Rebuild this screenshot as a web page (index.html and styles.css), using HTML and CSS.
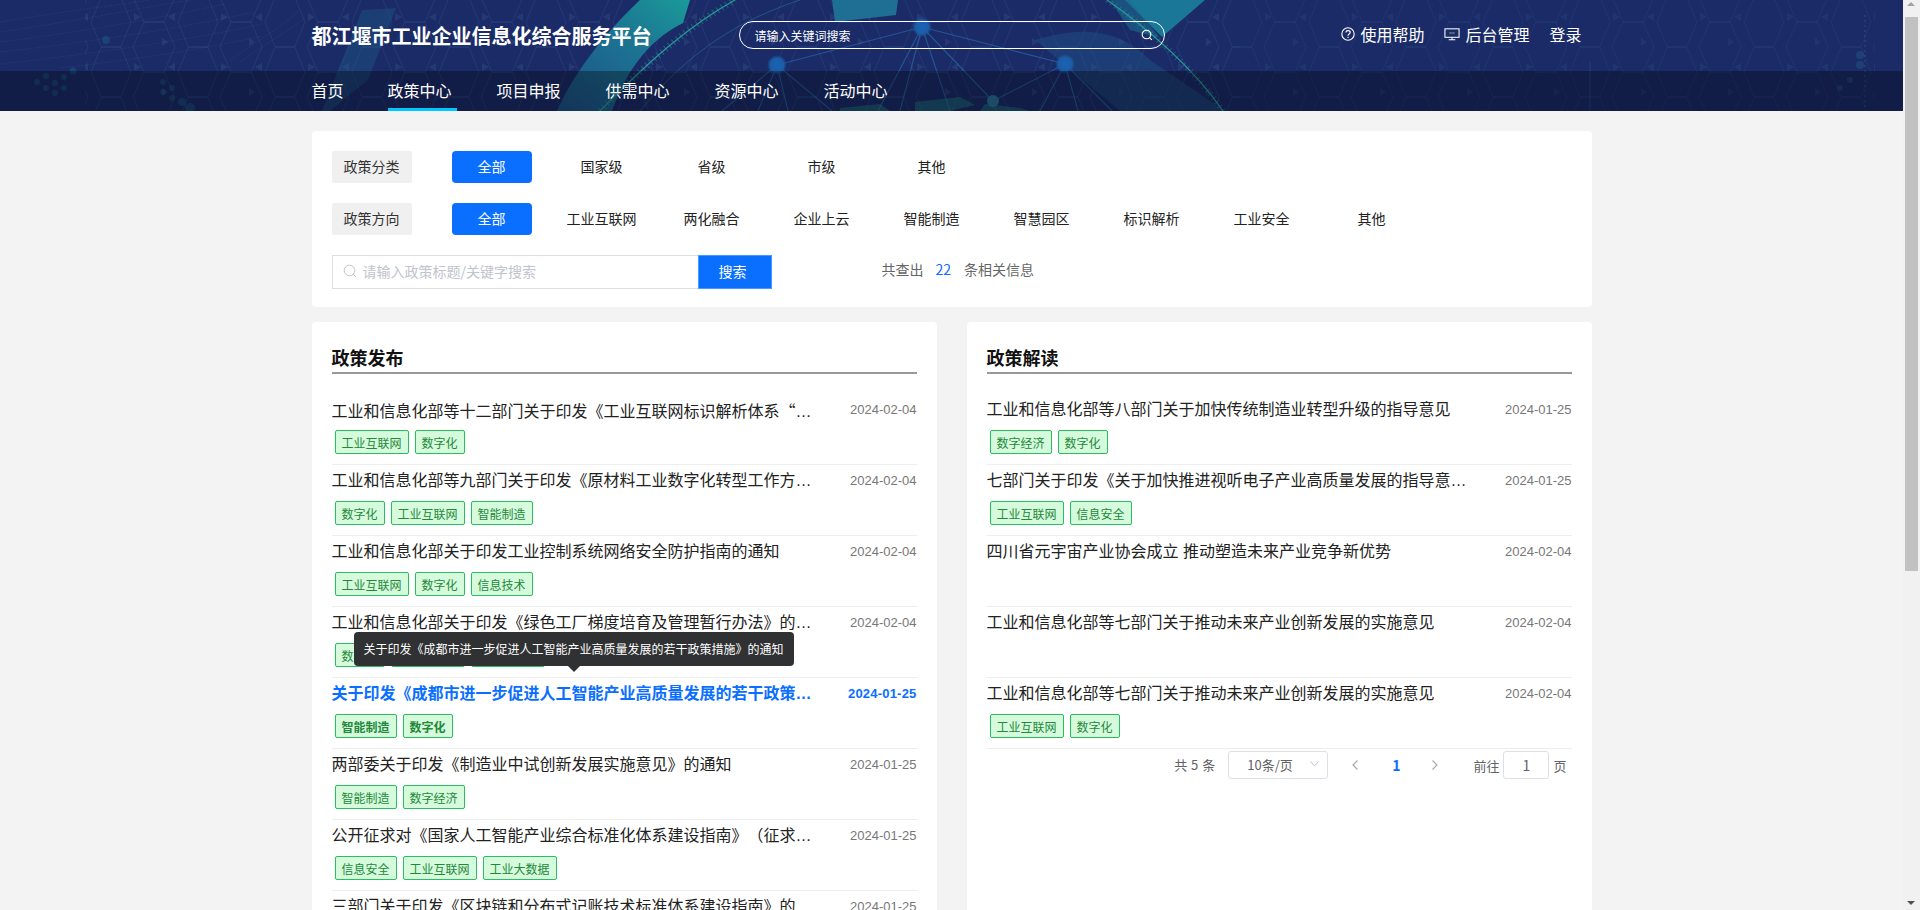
FILE: index.html
```html
<!DOCTYPE html>
<html lang="zh-CN">
<head>
    <meta charset="UTF-8">
    <title>都江堰市工业企业信息化综合服务平台</title>
    <link rel="stylesheet" href="styles.css">
</head>
<body>
    <header class="site-header">
        <!-- header artwork: hex grid, arcs and network -->
        <svg class="header-art" width="1903" height="111" viewBox="0 0 1903 111">
            <defs>
                <pattern id="hex" x="68" y="-3" width="87" height="50" patternUnits="userSpaceOnUse">
                    <path d="M33 0.500 H53 L63 25 L53 49.500 H33 L23 25 Z" fill="none" stroke="#4f7fb5" stroke-opacity=".16"/>
                    <path d="M-11 25 H9 L20 50 L9 75 H-11 L-22 50 Z" fill="none" stroke="#4f7fb5" stroke-opacity=".16"/>
                    <path d="M76 25 H96 L107 50 L96 75 H76 L65 50 Z" fill="none" stroke="#4f7fb5" stroke-opacity=".16"/>
                    <path d="M76 -25 H96 L107 0 L96 25 H76 L65 0 Z" fill="none" stroke="#4f7fb5" stroke-opacity=".16"/>
                    <path d="M-11 -25 H9 L20 0 L9 25 H-11 L-22 0 Z" fill="none" stroke="#4f7fb5" stroke-opacity=".16"/>
                    <path d="M13 20 L20 16 V24 Z M66 16 L73 20 L66 24 Z M13 45 L7 41 V49 Z" fill="#6f8fc0" fill-opacity=".14"/>
                </pattern>
                <linearGradient id="band" x1="0" y1="1" x2="1" y2="0">
                    <stop offset="0" stop-color="#1c4f88"/>
                    <stop offset=".6" stop-color="#1c7592"/>
                    <stop offset="1" stop-color="#1a9a9a"/>
                </linearGradient>
                <radialGradient id="node">
                    <stop offset="0" stop-color="#1b63b5"/>
                    <stop offset=".65" stop-color="#1b5ea8"/>
                    <stop offset="1" stop-color="#1b5ea8" stop-opacity="0"/>
                </radialGradient>
            </defs>
            <rect width="1903" height="111" fill="#1a2b67"/>
            <g stroke="#5a80b8" stroke-opacity=".14" stroke-dasharray="2 1" fill="none">
                <path d="M0 22 C60 12 110 6 150 0"/>
                <path d="M0 32 C70 22 130 10 190 0"/>
                <path d="M0 42 C80 32 150 20 225 4"/>
                <path d="M0 52 C90 42 170 30 255 12"/>
                <path d="M0 64 C90 54 190 40 262 24"/>
                <path d="M60 68 C130 60 200 50 262 36"/>
                <path d="M230 60 C260 40 290 20 300 10"/>
                <path d="M240 62 C265 44 290 30 305 18"/>
            </g>
            <rect x="85" y="0" width="1790" height="111" fill="url(#hex)"/>
            <rect x="1240" y="0" width="663" height="111" fill="#1a2b67" fill-opacity=".3"/>
            <g fill="#1e7f94" fill-opacity=".3">
                <circle cx="106" cy="40" r="4"/><circle cx="73" cy="71" r="3.500"/>
                <circle cx="37" cy="82" r="3"/><circle cx="46" cy="76" r="3"/><circle cx="46" cy="88" r="3"/>
                <circle cx="55" cy="83" r="3"/><circle cx="64" cy="77" r="3"/><circle cx="64" cy="88" r="3"/><circle cx="55" cy="93" r="3"/>
                <circle cx="163" cy="82" r="3"/><circle cx="172" cy="88" r="3"/><circle cx="163" cy="92" r="3"/><circle cx="172" cy="98" r="3"/><circle cx="182" cy="102" r="4"/>
                <circle cx="190" cy="108" r="5"/>
            </g>
            <path d="M362 10 L396 8 L368 80 L330 111 L322 111 Z" fill="#1d6a94" fill-opacity=".3"/>
            <path d="M557 111 C575 70 608 30 640 0 L690 0 L683 23 C645 42 625 75 612 111 Z" fill="url(#band)"/>
            <path d="M832 0 H898 L896 15 L835 22 Z" fill="#1f6f95"/>
            <path d="M1035 40 C1085 25 1120 30 1150 60 L1225 111 H1120 Z" fill="#1f4f85" fill-opacity=".5"/>
            <path d="M1125 0 H1205 L1162 37 Z" fill="#1a7798"/>
            <path d="M1110 0 H1130 L1160 38 L1130 30 Z" fill="#1b6a90" fill-opacity=".6"/>
            <path d="M600 111 C650 60 690 25 735 0" fill="none" stroke="#2a9a9a" stroke-width="1.200"/>
            <path d="M600 111 C650 60 690 25 735 0" fill="none" stroke="#2a9a9a" stroke-width="7" stroke-dasharray="1 4" stroke-opacity=".5"/>
            <path d="M1107 0 C1150 30 1195 70 1223 111" fill="none" stroke="#2a9a9a" stroke-width="1.200"/>
            <path d="M1107 0 C1150 30 1195 70 1223 111" fill="none" stroke="#2a9a9a" stroke-width="6" stroke-dasharray="1 4" stroke-opacity=".45"/>
            <path d="M640 111 C690 50 740 20 800 0" fill="none" stroke="#2a8a9a" stroke-opacity=".45"/>
            <g stroke="#2a72b5" stroke-width="1.200" stroke-opacity=".6" fill="none">
                <path d="M777 65 L922 27 L1065 64 L993 101"/>
                <path d="M922 27 L878 111 M922 27 L900 111 M922 27 L993 101 M922 27 L950 111"/>
                <path d="M777 65 L722 111 M777 65 L758 111 M777 65 L788 111 M777 65 L832 111"/>
                <path d="M1065 64 L1040 111 M1065 64 L1078 111 M1065 64 L1112 111"/>
            </g>
            <circle cx="922" cy="27" r="10" fill="url(#node)"/>
            <circle cx="777" cy="65" r="10" fill="url(#node)"/>
            <circle cx="1065" cy="64" r="10" fill="url(#node)"/>
            <circle cx="993" cy="101" r="6" fill="#2a6f9a"/>
            <path d="M915 102 L960 97 L975 105 L950 111 H915 Z M840 108 L880 104 L890 111 H840 Z M985 104 L1020 108 L1030 111 H980 Z" fill="#1f7f8a" fill-opacity=".5"/>
            <path d="M1590 62 V111" stroke="#3f6fa5" stroke-opacity=".35"/>
            <path d="M1865 15 V111" stroke="#3f6fa5" stroke-opacity=".5" stroke-dasharray="2 3"/>
            <g fill="#2a6f9a" fill-opacity=".3">
                <circle cx="1860" cy="55" r="4"/><circle cx="1860" cy="65" r="4"/><circle cx="1850" cy="80" r="3"/><circle cx="1840" cy="88" r="3"/>
            </g>
        </svg>
        <div class="top-bar">
            <div class="wrap top-inner">
                <h1 class="site-title">都江堰市工业企业信息化综合服务平台</h1>
                <div class="top-search">
                    <span>请输入关键词搜索</span>
                    <svg width="12" height="12" viewBox="0 0 12 12" fill="none" stroke="#fff" stroke-width="1.100"><circle cx="5.500" cy="5.500" r="4.300"/><path d="M8.600 8.600 L10.800 10.800"/></svg>
                </div>
                <div class="top-links">
                    <a class="top-link">
                        <svg width="14" height="14" viewBox="0 0 14 14" fill="none" stroke="#fff" stroke-width="1.100"><circle cx="7" cy="7" r="6.200"/><path d="M5 5.500 C5 2.900 9.200 3 9.200 5.400 C9.200 7 7 7 7 8.700"/><path d="M7 9.800 V11"/></svg>
                        使用帮助
                    </a>
                    <a class="top-link">
                        <svg width="16" height="14" viewBox="0 0 17 14" fill="none" stroke="#fff" stroke-width="1.100"><rect x="1" y="1.500" width="15" height="9"/><path d="M5 13 H12 M8.500 10.500 V13"/><path d="M6 6 H7 M8 6 H9 M10 6 H11"/></svg>
                        后台管理
                    </a>
                    <a class="top-link">登录</a>
                </div>
            </div>
        </div>
        <nav class="main-nav">
            <div class="wrap nav-inner">
                <a class="nav-item nav-first">首页</a>
                <a class="nav-item active">政策中心</a>
                <a class="nav-item">项目申报</a>
                <a class="nav-item">供需中心</a>
                <a class="nav-item">资源中心</a>
                <a class="nav-item">活动中心</a>
            </div>
        </nav>
    </header>

    <main class="wrap page-main">
        <section class="card filter-card">
            <div class="filter-row">
                <span class="filter-label">政策分类</span>
                <a class="filter-opt selected">全部</a>
                <a class="filter-opt">国家级</a>
                <a class="filter-opt">省级</a>
                <a class="filter-opt">市级</a>
                <a class="filter-opt">其他</a>
            </div>
            <div class="filter-row">
                <span class="filter-label">政策方向</span>
                <a class="filter-opt selected">全部</a>
                <a class="filter-opt">工业互联网</a>
                <a class="filter-opt">两化融合</a>
                <a class="filter-opt">企业上云</a>
                <a class="filter-opt">智能制造</a>
                <a class="filter-opt">智慧园区</a>
                <a class="filter-opt">标识解析</a>
                <a class="filter-opt">工业安全</a>
                <a class="filter-opt">其他</a>
            </div>
            <div class="search-row">
                <div class="search-box">
                    <svg width="14" height="14" viewBox="0 0 14 14" fill="none" stroke="#c0c4cc" stroke-width="1"><circle cx="6.500" cy="6.500" r="5.300"/><path d="M10.300 10.300 L12.800 12.800"/></svg>
                    <span>请输入政策标题/关键字搜索</span>
                </div>
                <button class="search-btn">搜索</button>
                <p class="result-count">共查出<b>22</b>条相关信息</p>
            </div>
        </section>

        <div class="columns">
            <section class="card list-card">
                <h2 class="list-title">政策发布</h2>
                <ul class="policy-list">
                    <li class="policy-item">
                        <div class="item-head"><span class="item-name">工业和信息化部等十二部门关于印发《工业互联网标识解析体系<span class="cjk">“贯通”</span>行动计划（2024-2026年）》的通知</span><span class="item-date">2024-02-04</span></div>
                        <div class="tags"><span class="tag">工业互联网</span><span class="tag">数字化</span></div>
                    </li>
                    <li class="policy-item">
                        <div class="item-head"><span class="item-name">工业和信息化部等九部门关于印发《原材料工业数字化转型工作方案（2024—2026年）》的通知</span><span class="item-date">2024-02-04</span></div>
                        <div class="tags"><span class="tag">数字化</span><span class="tag">工业互联网</span><span class="tag">智能制造</span></div>
                    </li>
                    <li class="policy-item">
                        <div class="item-head"><span class="item-name">工业和信息化部关于印发工业控制系统网络安全防护指南的通知</span><span class="item-date">2024-02-04</span></div>
                        <div class="tags"><span class="tag">工业互联网</span><span class="tag">数字化</span><span class="tag">信息技术</span></div>
                    </li>
                    <li class="policy-item">
                        <div class="item-head"><span class="item-name">工业和信息化部关于印发《绿色工厂梯度培育及管理暂行办法》的通知</span><span class="item-date">2024-02-04</span></div>
                        <div class="tags"><span class="tag">数字化</span><span class="tag">工业互联网</span><span class="tag">工业大数据</span></div>
                    </li>
                    <li class="policy-item hovered">
                        <div class="tooltip">关于印发《成都市进一步促进人工智能产业高质量发展的若干政策措施》的通知</div>
                        <div class="item-head"><span class="item-name">关于印发《成都市进一步促进人工智能产业高质量发展的若干政策措施》的通知</span><span class="item-date">2024-01-25</span></div>
                        <div class="tags"><span class="tag">智能制造</span><span class="tag">数字化</span></div>
                    </li>
                    <li class="policy-item">
                        <div class="item-head"><span class="item-name">两部委关于印发《制造业中试创新发展实施意见》的通知</span><span class="item-date">2024-01-25</span></div>
                        <div class="tags"><span class="tag">智能制造</span><span class="tag">数字经济</span></div>
                    </li>
                    <li class="policy-item">
                        <div class="item-head"><span class="item-name">公开征求对《国家人工智能产业综合标准化体系建设指南》（征求意见稿）的意见</span><span class="item-date">2024-01-25</span></div>
                        <div class="tags"><span class="tag">信息安全</span><span class="tag">工业互联网</span><span class="tag">工业大数据</span></div>
                    </li>
                    <li class="policy-item">
                        <div class="item-head"><span class="item-name">三部门关于印发《区块链和分布式记账技术标准体系建设指南》的通知</span><span class="item-date">2024-01-25</span></div>
                        <div class="tags"><span class="tag">数字化</span></div>
                    </li>
                </ul>
            </section>

            <section class="card list-card">
                <h2 class="list-title">政策解读</h2>
                <ul class="policy-list">
                    <li class="policy-item">
                        <div class="item-head"><span class="item-name">工业和信息化部等八部门关于加快传统制造业转型升级的指导意见</span><span class="item-date">2024-01-25</span></div>
                        <div class="tags"><span class="tag">数字经济</span><span class="tag">数字化</span></div>
                    </li>
                    <li class="policy-item">
                        <div class="item-head"><span class="item-name">七部门关于印发《关于加快推进视听电子产业高质量发展的指导意见》的通知</span><span class="item-date">2024-01-25</span></div>
                        <div class="tags"><span class="tag">工业互联网</span><span class="tag">信息安全</span></div>
                    </li>
                    <li class="policy-item">
                        <div class="item-head"><span class="item-name">四川省元宇宙产业协会成立 推动塑造未来产业竞争新优势</span><span class="item-date">2024-02-04</span></div>
                        <div class="tags"></div>
                    </li>
                    <li class="policy-item">
                        <div class="item-head"><span class="item-name">工业和信息化部等七部门关于推动未来产业创新发展的实施意见</span><span class="item-date">2024-02-04</span></div>
                        <div class="tags"></div>
                    </li>
                    <li class="policy-item">
                        <div class="item-head"><span class="item-name">工业和信息化部等七部门关于推动未来产业创新发展的实施意见</span><span class="item-date">2024-02-04</span></div>
                        <div class="tags"><span class="tag">工业互联网</span><span class="tag">数字化</span></div>
                    </li>
                </ul>
                <div class="pager">
                    <span class="pager-total">共 5 条</span>
                    <div class="pager-size">
                        <span>10条/页</span>
                        <svg width="9" height="6" viewBox="0 0 9 6" fill="none" stroke="#c0c4cc"><path d="M0.500 0.500 L4.500 5 L8.500 0.500"/></svg>
                    </div>
                    <svg class="pager-prev" width="6" height="10" viewBox="0 0 6 10" fill="none" stroke="#a8abb2" stroke-width="1.200"><path d="M5.500 0.500 L1 5 L5.500 9.500"/></svg>
                    <span class="pager-num">1</span>
                    <svg class="pager-next" width="6" height="10" viewBox="0 0 6 10" fill="none" stroke="#a8abb2" stroke-width="1.200"><path d="M0.500 0.500 L5 5 L0.500 9.500"/></svg>
                    <span class="pager-goto">前往</span>
                    <div class="pager-input">1</div>
                    <span>页</span>
                </div>
            </section>
        </div>
    </main>

    <!-- the browser hides real scrollbars, so this one is drawn over the page edge -->
    <div class="scrollbar">
        <span class="scroll-up"></span>
        <span class="scroll-thumb"></span>
        <span class="scroll-down"></span>
    </div>
</body>
</html>
```

FILE: styles.css
```css
* {
    box-sizing: border-box;
}
body {
    margin: 0;
    padding-right: 17px;
    min-height: 1441px;
    display: flex;
    flex-direction: column;
    background-color: #f3f3f3;
    font-family: "Noto Sans CJK SC", "Noto Sans", sans-serif;
    text-spacing-trim: space-all;
    color: #222;
}
ul {
    list-style: none;
    margin: 0;
    padding: 0;
}
.wrap {
    width: 1280px;
    margin: 0 auto;
}

/* header */
.site-header {
    position: relative;
    height: 111px;
    color: #fff;
    overflow: hidden;
}
.header-art {
    position: absolute;
    top: 0;
    left: 0;
}
.top-bar {
    position: relative;
    height: 71px;
}
.top-inner {
    display: flex;
    align-items: center;
    height: 71px;
    padding-right: 10px;
}
.site-title {
    margin: 0 87px 0 0;
    font-size: 20px;
    font-weight: 700;
    white-space: nowrap;
}
.top-search {
    display: flex;
    align-items: center;
    justify-content: space-between;
    width: 426px;
    height: 28px;
    padding: 0 11px 0 15px;
    border: 1px solid #fff;
    border-radius: 14px;
    font-size: 12px;
    margin-top: -1px;
}
.top-links {
    display: flex;
    gap: 20px;
    margin-left: auto;
    font-size: 16px;
    margin-top: -4px;
}
.top-link {
    display: flex;
    align-items: center;
    gap: 5px;
}
.main-nav {
    position: relative;
    height: 40px;
    background: rgba(0, 0, 0, 0.32);
}
.nav-inner {
    display: flex;
    gap: 40px;
    height: 40px;
}
.nav-item {
    height: 40px;
    padding-right: 5px;
    font-size: 16px;
    line-height: 38px;
}
.nav-first {
    padding-right: 4px;
}
.nav-item.active {
    border-bottom: 3px solid #00c8ff;
}

/* cards */
.page-main {
    flex: 1;
    display: flex;
    flex-direction: column;
    gap: 15px;
    padding-top: 20px;
    padding-bottom: 20px;
}
.card {
    background: #fff;
    border-radius: 4px;
}
.filter-card {
    height: 176px;
    padding: 20px;
}
.filter-row {
    display: flex;
    gap: 30px;
    margin-bottom: 20px;
    font-size: 14px;
}
.filter-label {
    width: 80px;
    height: 32px;
    margin-right: 10px;
    background: #f0f0f0;
    border-radius: 2px;
    line-height: 30px;
    text-align: center;
    color: #333;
}
.filter-opt {
    width: 80px;
    height: 32px;
    border-radius: 4px;
    line-height: 30px;
    text-align: center;
    white-space: nowrap;
}
.filter-opt.selected {
    background: #0a6fff;
    color: #fff;
}
.search-row {
    display: flex;
    align-items: center;
    font-size: 14px;
}
.search-box {
    display: flex;
    align-items: center;
    gap: 6px;
    width: 366px;
    height: 34px;
    padding: 0 0 2px 10px;
    border: 1px solid #dcdfe6;
    border-right: 0;
    color: #c0c4cc;
}
.search-btn {
    width: 74px;
    height: 34px;
    padding: 0 4px 2px 0;
    border: 1px solid #409eff;
    background: #0a6fff;
    color: #fff;
    font: inherit;
}
.result-count {
    margin: -6px 0 0 110px;
    color: #666;
}
.result-count b {
    margin: 0 13px 0 12px;
    font-weight: 400;
    color: #0a6fff;
}

/* lists */
.columns {
    flex: 1;
    display: grid;
    grid-template-columns: 625px 625px;
    justify-content: space-between;
}
.list-card {
    padding: 20px;
}
.list-title {
    height: 32px;
    margin: 0 0 20px;
    border-bottom: 2px solid #999;
    font-size: 18px;
    font-weight: 700;
    line-height: 30px;
    color: #111;
}
.policy-item {
    position: relative;
    height: 71px;
    border-bottom: 1px solid #eee;
}
.item-head {
    display: flex;
    justify-content: space-between;
    height: 32px;
    line-height: 32px;
}
.item-name {
    width: 484px;
    overflow: hidden;
    white-space: nowrap;
    text-overflow: ellipsis;
    /* Latin first so the ellipsis comes out as three small dots */
    font-family: "Liberation Sans", "Noto Sans CJK SC", sans-serif;
    font-size: 16px;
}
.cjk {
    font-family: "Noto Sans CJK SC", sans-serif;
}
.item-date {
    font-family: "Liberation Sans", sans-serif;
    font-size: 13px;
    color: #777;
}
.tags {
    display: flex;
    gap: 6px;
    margin: 4px 0 0 3px;
}
.tag {
    height: 24px;
    padding: 0 6px;
    border: 1px solid #27bf5f;
    border-radius: 2px;
    background: #d5fbdc;
    font-size: 12px;
    line-height: 23px;
    color: #23883a;
}
.hovered .item-name,
.hovered .item-date {
    font-weight: 700;
    color: #0a6fff;
}
.hovered .item-date {
    letter-spacing: 0.2px;
}
.hovered .tag {
    font-weight: 700;
}
.tooltip {
    position: absolute;
    top: -46px;
    left: 22px;
    z-index: 2;
    padding: 10px;
    border-radius: 4px;
    background: #303133;
    color: #fff;
    font-size: 12px;
    line-height: 14px;
    white-space: nowrap;
}
.tooltip::after {
    content: "";
    position: absolute;
    left: 214px;
    bottom: -6px;
    border: 6px solid transparent;
    border-bottom: 0;
    border-top-color: #303133;
}

/* pagination */
.pager {
    display: flex;
    align-items: center;
    justify-content: flex-end;
    height: 28px;
    margin-top: 2px;
    padding-right: 5px;
    font-size: 13px;
    color: #606266;
}
.pager-total {
    margin-top: -2px;
    word-spacing: 1px;
}
.pager-size {
    display: flex;
    align-items: center;
    justify-content: space-between;
    width: 100px;
    height: 28px;
    margin-left: 13px;
    padding: 0 8px 2px 18px;
    border: 1px solid #dcdfe6;
    border-radius: 3px;
    font-size: 13px;
}
.pager-prev {
    margin-left: 24px;
}
.pager-num {
    margin-left: 34px;
    margin-right: 7px;
    font-size: 14px;
    font-weight: 700;
    color: #0a6fff;
}
.pager-next {
    margin-left: 25px;
}
.pager-goto {
    margin-left: 35px;
}
.pager-input {
    width: 46px;
    height: 28px;
    margin: 0 4px;
    border: 1px solid #dcdfe6;
    border-radius: 3px;
    font-size: 14px;
    text-align: center;
    line-height: 26px;
}

/* scrollbar */
.scrollbar {
    position: fixed;
    top: 0;
    right: 0;
    bottom: 0;
    z-index: 5;
    width: 17px;
    background: #f1f1f1;
}
.scroll-thumb {
    position: absolute;
    top: 17px;
    left: 2px;
    width: 13px;
    height: 554px;
    background: #c1c1c1;
}
.scroll-up,
.scroll-down {
    position: absolute;
    left: 4px;
    border: 4.500px solid transparent;
}
.scroll-up {
    top: 2px;
    border-top: 0;
    border-bottom-color: #a3a3a3;
}
.scroll-down {
    bottom: 5px;
    border-bottom: 0;
    border-top-color: #505050;
}
```
